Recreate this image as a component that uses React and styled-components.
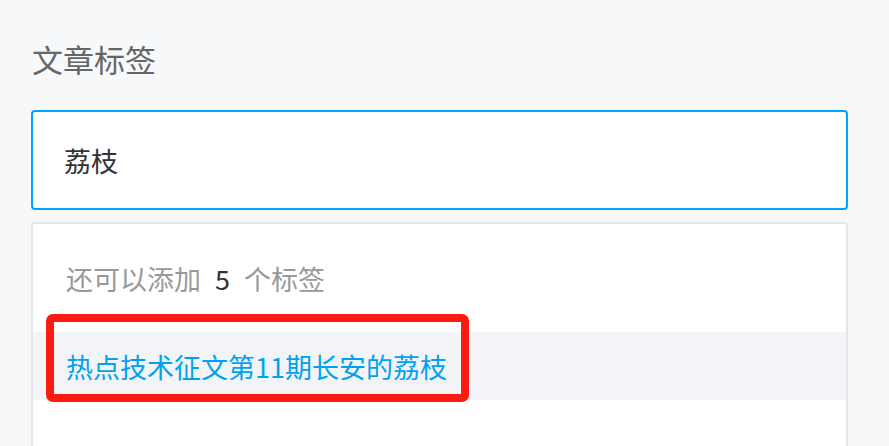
import React from "react";
import styled, { createGlobalStyle } from "styled-components";

const Global = createGlobalStyle`
  html, body { margin: 0; padding: 0; background: #f7f8fa; }
  body { font-family: "Noto Sans CJK SC", "Noto Sans", sans-serif; }
`;

const Page = styled.div`
  position: relative;
  width: 889px;
  height: 446px;
  overflow: hidden;
  box-sizing: border-box;
  padding: 34px 41px 0 31px;
  display: flex;
  flex-direction: column;
  & > * { flex-shrink: 0; }
`;

const Title = styled.div`
  font-size: 31px;
  line-height: 50px;
  color: #666;
  padding-left: 1px;
  margin-bottom: 26px;
`;

const Input = styled.div`
  box-sizing: border-box;
  height: 100px;
  border: 2px solid #00a4ff;
  border-radius: 4px;
  background: #fff;
  display: flex;
  align-items: center;
  padding-left: 31px;
  font-size: 27px;
  color: #333;
`;

const Dropdown = styled.div`
  margin-top: 12px;
  box-sizing: border-box;
  height: 260px;
  border: 2px solid #e5e6e8;
  border-bottom: none;
  border-radius: 4px 4px 0 0;
  background: #fff;
  display: flex;
  flex-direction: column;
`;

const Hint = styled.div`
  height: 108px;
  display: flex;
  align-items: center;
  padding-left: 33px;
  font-size: 27px;
  color: #999;
`;

const Count = styled.span`
  color: #333;
  margin: 0 14px;
`;

const Option = styled.div`
  height: 68px;
  display: flex;
  align-items: center;
  padding-left: 33px;
  background: ${(p) => (p.$active ? "#f3f4f7" : "#fff")};
  color: #00a2f0;
  font-size: 27px;
`;

const Highlight = styled.div`
  position: absolute;
  left: 46px;
  top: 314px;
  width: 423px;
  height: 88px;
  box-sizing: border-box;
  border: 8px solid #ff1a10;
  border-radius: 7px;
  pointer-events: none;
`;

export default function App() {
  return (
    <>
      <Global />
      <Page>
        <Title>文章标签</Title>
        <Input>荔枝</Input>
        <Dropdown>
          <Hint>
            还可以添加<Count>5</Count>个标签
          </Hint>
          <Option $active>热点技术征文第11期长安的荔枝</Option>
        </Dropdown>
        <Highlight />
      </Page>
    </>
  );
}
